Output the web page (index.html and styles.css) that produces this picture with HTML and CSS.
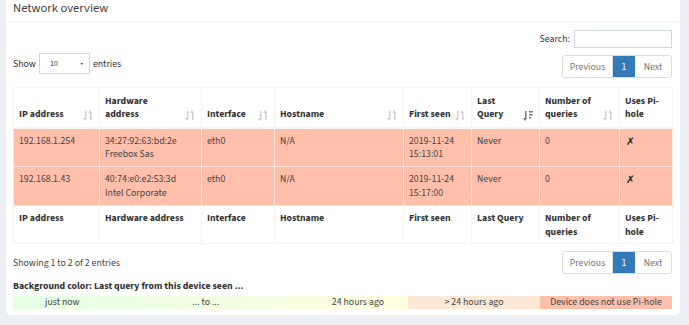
FILE: index.html
```html
<!DOCTYPE html>
<html>
<head>
<meta charset="utf-8">
<link rel="stylesheet" href="styles.css">
</head>
<body>
<div class="box">
  <div class="box-header"><h3 class="box-title">Network overview</h3></div>
  <div class="box-body">
    <div class="search-row"><label>Search: <input class="search-input" type="text"></label></div>
    <div class="controls">
      <div class="length">Show <span class="select">10 <span class="caret">▾</span></span> entries</div>
      <div class="pager">
        <span class="pg disabled">Previous</span><span class="pg active">1</span><span class="pg disabled">Next</span>
      </div>
    </div>
    <table class="net">
      <colgroup>
        <col style="width:86px"><col style="width:102px"><col style="width:73px"><col style="width:129px"><col style="width:68px"><col style="width:68px"><col style="width:80px"><col style="width:53px">
      </colgroup>
      <thead>
        <tr>
          <th><span class="thw">IP address<i class="sort"></i></span></th>
          <th><span class="thw">Hardware<br>address<i class="sort"></i></span></th>
          <th><span class="thw">Interface<i class="sort"></i></span></th>
          <th><span class="thw">Hostname<i class="sort"></i></span></th>
          <th><span class="thw">First seen<i class="sort"></i></span></th>
          <th><span class="thw">Last<br>Query<i class="sort desc"></i></span></th>
          <th><span class="thw">Number of<br>queries<i class="sort"></i></span></th>
          <th><span class="thw">Uses Pi-<br>hole</span></th>
        </tr>
      </thead>
      <tbody>
        <tr>
          <td>192.168.1.254</td>
          <td>34:27:92:63:bd:2e<br>Freebox Sas</td>
          <td>eth0</td>
          <td>N/A</td>
          <td>2019-11-24<br>15:13:01</td>
          <td>Never</td>
          <td>0</td>
          <td class="x">✗</td>
        </tr>
        <tr>
          <td>192.168.1.43</td>
          <td>40:74:e0:e2:53:3d<br>Intel Corporate</td>
          <td>eth0</td>
          <td>N/A</td>
          <td>2019-11-24<br>15:17:00</td>
          <td>Never</td>
          <td>0</td>
          <td class="x">✗</td>
        </tr>
      </tbody>
      <tfoot>
        <tr>
          <th>IP address</th>
          <th>Hardware address</th>
          <th>Interface</th>
          <th>Hostname</th>
          <th>First seen</th>
          <th>Last Query</th>
          <th>Number of<br>queries</th>
          <th>Uses Pi-<br>hole</th>
        </tr>
      </tfoot>
    </table>
    <div class="bottom">
      <div class="info">Showing 1 to 2 of 2 entries</div>
      <div class="pager">
        <span class="pg disabled">Previous</span><span class="pg active">1</span><span class="pg disabled">Next</span>
      </div>
    </div>
    <p class="legend-title">Background color: Last query from this device seen ...</p>
    <div class="legend">
      <div class="lg recent"><span>just now</span><span>... to ...</span><span>24 hours ago</span></div>
      <div class="lg old">&gt; 24 hours ago</div>
      <div class="lg never">Device does not use Pi-hole</div>
    </div>
  </div>
</div>
</body>
</html>
```

FILE: styles.css
```css
* { box-sizing: border-box; }
html, body {
  margin: 0;
  padding: 0;
  background: #ecf0f5;
  font-family: "Source Sans 3", "Lato", sans-serif;
  font-size: 9.8px;
  color: #333;
}
.box {
  margin: -6px 9px 0 6px;
  background: #fff;
  border-radius: 3px;
  box-shadow: 0 1px 1px rgba(0,0,0,0.1);
  height: 321px;
}
.box-header {
  height: 28px;
  padding: 6px 8px 0 7px;
  border-bottom: 1px solid #f4f4f4;
}
.box-title {
  margin: 0;
  font-size: 12.6px;
  font-weight: normal;
  line-height: 16px;
  color: #444;
}
.box-body {
  padding: 8px 8px 0 7px;
}
.search-row {
  display: flex;
  justify-content: flex-end;
  height: 18px;
}
.search-row label {
  display: flex;
  align-items: center;
  gap: 4px;
}
.search-input {
  width: 98px;
  height: 18px;
  border: 1px solid #d2d6de;
  margin: 0;
  padding: 0;
}
.controls {
  display: flex;
  justify-content: space-between;
  align-items: flex-start;
  margin-top: 7px;
  height: 32px;
}
.length {
  display: flex;
  align-items: center;
  gap: 3px;
  margin-top: -2px;
}
.select {
  display: inline-flex;
  justify-content: space-between;
  align-items: center;
  width: 51px;
  height: 21px;
  border: 1px solid #d2d6de;
  padding: 0 6px 0 10px;
  font-size: 8px;
}
.caret { font-size: 8px; }
.pager {
  display: flex;
  height: 23px;
  border: 1px solid #ddd;
  border-radius: 3px;
}
.pg {
  display: flex;
  align-items: center;
  justify-content: center;
  color: #777;
}
.pg:first-child { width: 50px; border-right: 1px solid #ddd; }
.pg:last-child { width: 36px; }
.pg.active {
  background: #337ab7;
  color: #fff;
  width: 22px;
}
.net {
  width: 659px;
  border-collapse: collapse;
  table-layout: fixed;
}
.net th, .net td {
  border: 1px solid #f4f4f4;
  text-align: left;
  line-height: 13.5px;
}
.net thead th {
  height: 40px;
  vertical-align: bottom;
  padding: 0 6px 5px 5px;
  font-weight: bold;
  border-bottom: 2px solid #f4f4f4;
}
.thw {
  display: block;
  position: relative;
}
.sort {
  position: absolute;
  right: 0;
  bottom: 1px;
  width: 10px;
  height: 11px;
  background:
    linear-gradient(#d0d0d0,#d0d0d0) 1.5px 1px / 1.5px 8px no-repeat,
    linear-gradient(#d0d0d0,#d0d0d0) 6.5px 2px / 1.5px 8px no-repeat;
}
.sort::before, .sort::after {
  content: "";
  position: absolute;
  width: 0;
  height: 0;
  border-left: 2.25px solid transparent;
  border-right: 2.25px solid transparent;
}
.sort::before { left: 0; top: 8px; border-top: 3px solid #d0d0d0; }
.sort::after { left: 5px; top: 0; border-bottom: 3px solid #d0d0d0; }
.sort.desc {
  background:
    linear-gradient(#777,#777) 1.5px 1px / 1.5px 8px no-repeat,
    linear-gradient(#777,#777) 5.5px 1px / 4.5px 1.5px no-repeat,
    linear-gradient(#777,#777) 5.5px 4px / 3.5px 1.5px no-repeat,
    linear-gradient(#777,#777) 5.5px 7px / 2px 1.5px no-repeat;
}
.sort.desc::before { border-top-color: #777; }
.sort.desc::after { display: none; }
.net tbody td {
  background: #ffbfaa;
  border-color: #fde7df;
  vertical-align: top;
  height: 39px;
  padding: 6px 6px 0 5px;
  color: #444;
}
.net td.x { color: #222; padding-left: 6px; font-family: "DejaVu Sans", sans-serif; font-size: 10.5px; }
.net tfoot th {
  height: 38px;
  vertical-align: top;
  padding: 6px 6px 0 5px;
  font-weight: bold;
}
.bottom {
  display: flex;
  justify-content: space-between;
  align-items: center;
  margin-top: 7px;
  height: 23px;
}
.info { color: #444; }
.legend-title {
  margin: 5px 0 0;
  font-weight: bold;
  line-height: 14px;
}
.legend {
  display: flex;
  height: 13px;
  margin-top: 3px;
  line-height: 13px;
  color: #444;
}
.lg { display: flex; }
.recent {
  width: 395px;
  background: linear-gradient(to right, #e5ffe5, #ffffdf);
  justify-content: space-between;
  padding: 0 24px 0 32px;
}
.old {
  width: 132px;
  background: #ffe9d6;
  justify-content: center;
}
.never {
  width: 132px;
  background: #ffbfaa;
  justify-content: center;
}
```
